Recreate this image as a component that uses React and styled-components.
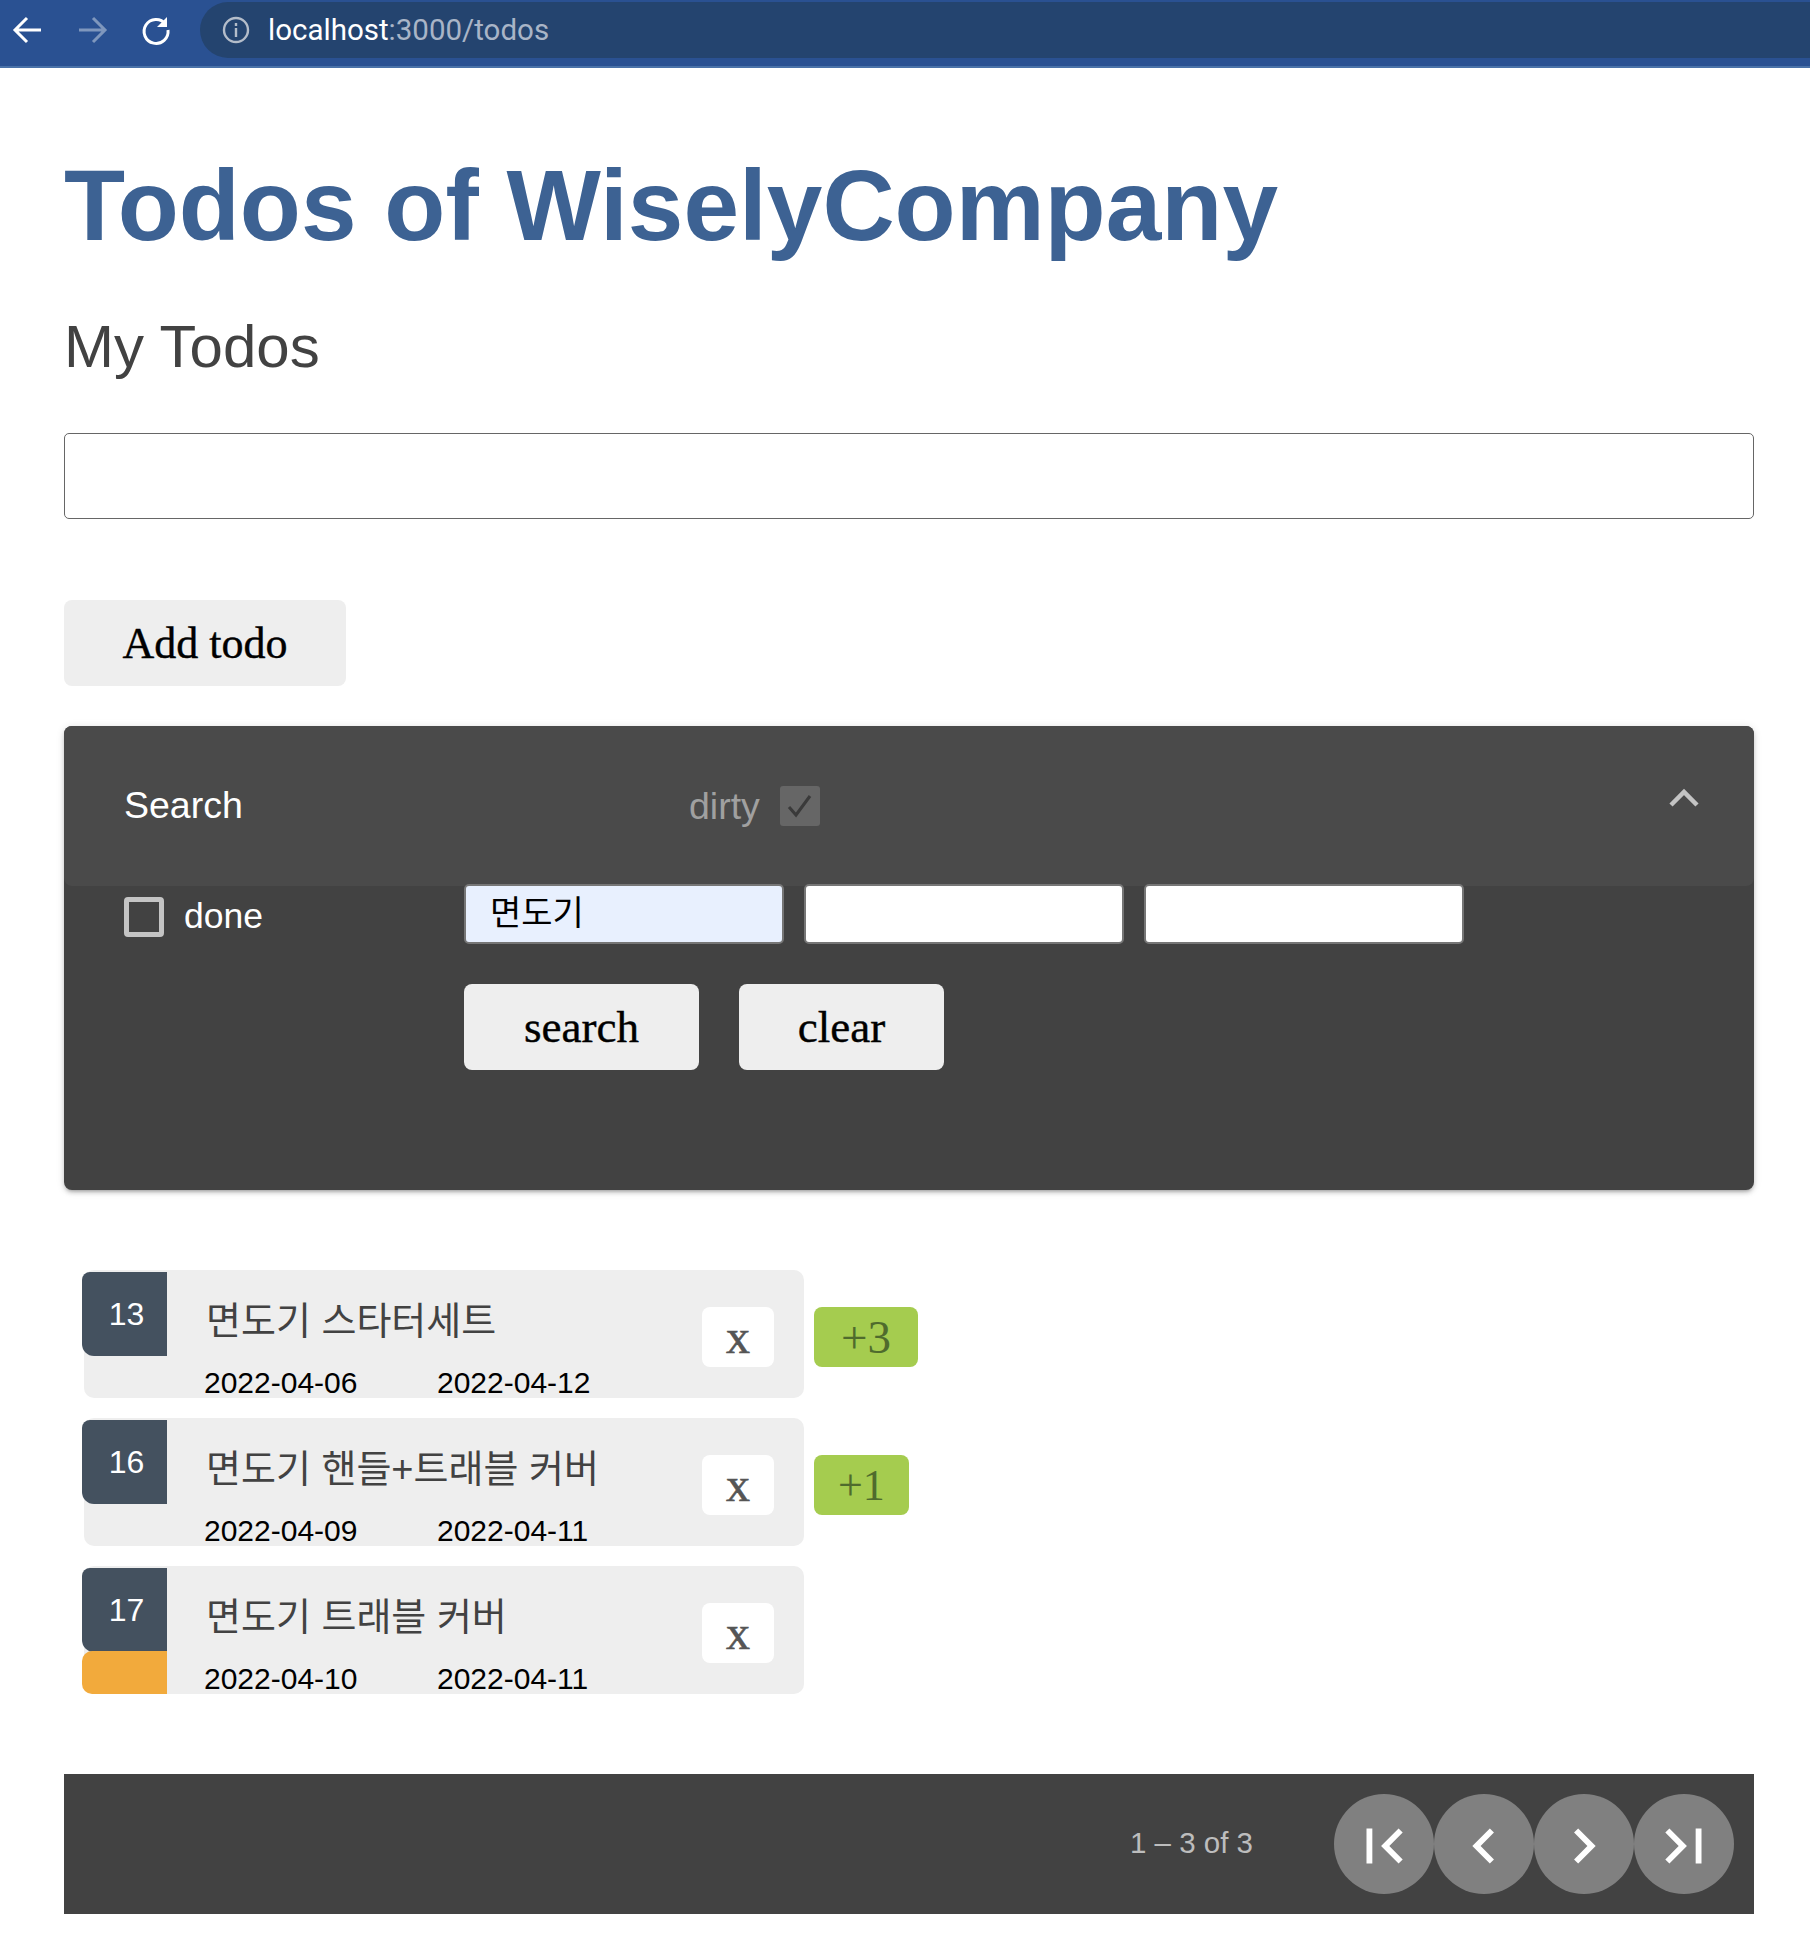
import React from 'react';
import styled, { createGlobalStyle } from 'styled-components';

const SANS = '"Liberation Sans", "Noto Sans CJK KR", sans-serif';
const SERIF = '"Liberation Serif", "Noto Sans CJK KR", serif';

const GlobalStyle = createGlobalStyle`
  html, body {
    margin: 0;
    padding: 0;
    background: #fff;
  }
  body {
    font-family: ${SANS};
    color: #424242;
  }
  * {
    box-sizing: border-box;
  }
`;

const BrowserBar = styled.div`
  height: 68px;
  padding-top: 2px;
  display: flex;
  background: #2a5192;
  border-bottom: 2px solid #4a72a8;
`;

const NavButtons = styled.div`
  width: 200px;
  height: 56px;
  flex: none;
  display: flex;
  align-items: center;
  padding-left: 10px;
  gap: 28px;
`;

const NavIcon = styled.svg`
  width: 36px;
  height: 36px;
  flex: none;
  fill: none;
  stroke: ${(props) => (props.$dim ? '#7f97bd' : '#fff')};
  stroke-width: 3;
`;

const AddressPill = styled.div`
  flex: 1;
  height: 56px;
  display: flex;
  align-items: center;
  padding-left: 22px;
  background: #24446f;
  border-radius: 28px 0 0 28px;
`;

const InfoIcon = styled.svg`
  width: 28px;
  height: 28px;
  margin-right: 18px;
  fill: none;
  stroke: #b4bdca;
  stroke-width: 2.4;
`;

const Url = styled.span`
  font-family: Roboto, sans-serif;
  font-size: 29.5px;
  color: #fff;
`;

const UrlRest = styled.span`
  color: #a9b5c7;
`;

const Page = styled.main`
  padding: 0 56px 32px 64px;
`;

const Title = styled.h1`
  margin: 81px 0 0;
  font-size: 100px;
  line-height: 112px;
  font-weight: 700;
  color: #3d6293;
`;

const Subtitle = styled.h2`
  margin: 52px 0 0;
  font-size: 60px;
  line-height: 68px;
  font-weight: 400;
  color: #424242;
`;

const TodoInput = styled.input`
  display: block;
  width: 100%;
  height: 86px;
  margin-top: 52px;
  border: 1.5px solid #666;
  border-radius: 5px;
  background: #fff;
`;

const Button = styled.button`
  width: ${(props) => props.$width}px;
  height: 86px;
  padding: 0;
  border: none;
  border-radius: 8px;
  background: #eee;
  color: #000;
  font-family: ${SERIF};
  font-size: ${(props) => props.$size || 44}px;
  -webkit-text-stroke: 0.4px #000;
`;

const AddRow = styled.div`
  margin-top: 81px;
`;

const SearchPanel = styled.section`
  margin-top: 40px;
  background: #424242;
  border-radius: 8px;
  box-shadow: 0 3px 3px -2px rgba(0, 0, 0, 0.2), 0 3px 4px 0 rgba(0, 0, 0, 0.14),
    0 1px 8px 0 rgba(0, 0, 0, 0.12);
`;

const PanelHeader = styled.div`
  height: 160px;
  display: flex;
  align-items: center;
  padding: 0 52px 0 60px;
  background: #4a4a4a;
  border-radius: 8px;
`;

const PanelTitle = styled.span`
  width: 565px;
  flex: none;
  margin-top: -2px;
  font-size: 37.5px;
  color: #fff;
`;

const DirtyLabel = styled.span`
  font-size: 37.5px;
  color: #a0a0a0;
`;

const DirtyBox = styled.span`
  width: 40px;
  height: 40px;
  margin-left: 20px;
  display: flex;
  align-items: center;
  justify-content: center;
  background: #666;
  border-radius: 3px;
`;

const DirtyCheck = styled.svg`
  width: 34px;
  height: 34px;
  fill: none;
  stroke: #3a3a3a;
  stroke-width: 3;
`;

const Chevron = styled.svg`
  width: 36px;
  height: 36px;
  margin-left: auto;
  margin-top: -18px;
  fill: none;
  stroke: #c4c4c4;
  stroke-width: 4.5;
`;

const PanelBody = styled.div`
  display: flex;
  padding: 0 60px 120px;
`;

const DoneField = styled.label`
  width: 340px;
  flex: none;
  display: flex;
  align-items: center;
  height: 61px;
  font-size: 35.5px;
  color: #fff;
`;

const DoneBox = styled.span`
  width: 40px;
  height: 40px;
  margin-right: 20px;
  border: 5px solid #c4c4c4;
  border-radius: 4px;
`;

const SearchForm = styled.div`
  display: flex;
  flex-direction: column;
  margin-top: -2px;
  position: relative;
`;

const FieldRow = styled.div`
  display: flex;
  gap: 20px;
`;

const SearchField = styled.input`
  width: 320px;
  height: 60px;
  padding: 0 24px 8px;
  border: 2px solid #767676;
  border-radius: 5px;
  background: ${(props) => (props.$filled ? '#e8f0fe' : '#fff')};
  color: #000;
  font-family: ${SERIF};
  font-size: 34px;
`;

const ActionRow = styled.div`
  display: flex;
  gap: 40px;
  margin-top: 40px;
`;

const TodoList = styled.div`
  margin-top: 80px;
  padding-left: 20px;
  display: flex;
  flex-direction: column;
  gap: 20px;
`;

const TodoRow = styled.div`
  display: flex;
  gap: 10px;
`;

const TodoCard = styled.div`
  width: 720px;
  height: 128px;
  display: flex;
  background: #eee;
  border-radius: 10px;
`;

const IdColumn = styled.div`
  width: 85px;
  flex: none;
  margin: 2px 0 0 -2px;
  display: flex;
  flex-direction: column;
`;

const IdBox = styled.div`
  height: 84px;
  flex: none;
  display: flex;
  align-items: center;
  justify-content: center;
  padding-left: 4px;
  background: #44515f;
  border-radius: 8px 0 0 12px;
  color: #fff;
  font-size: 32px;
`;

const WarnStrip = styled.div`
  flex: 1;
  margin-top: -1px;
  background: #f2aa3c;
  border-radius: 10px 0 0 10px;
`;

const TodoMain = styled.div`
  flex: 1;
  padding-left: 37px;
`;

const TodoTitle = styled.div`
  margin: 21px 0 0 2px;
  font-size: 38px;
  line-height: 60px;
  color: #424242;
`;

const Dates = styled.div`
  display: flex;
  margin-top: 15px;
  font-size: 30px;
  line-height: 34px;
  color: #000;
`;

const DateText = styled.span`
  width: 233px;
`;

const SquareButton = styled.button`
  width: 72px;
  height: 60px;
  flex: none;
  margin: 37px 30px 0 0;
  border: none;
  border-radius: 8px;
  background: #fff;
  color: #555;
  font-family: ${SERIF};
  font-size: 48px;
  line-height: 1;
  -webkit-text-stroke: 0.6px #555;
`;

const CountBadge = styled.button`
  height: 60px;
  margin-top: 37px;
  padding: 0 ${(props) => props.$pad}px;
  border: none;
  border-radius: 8px;
  background: #a5cc4f;
  color: #4f6b2d;
  font-family: ${SERIF};
  font-size: ${(props) => props.$size}px;
`;

const Paginator = styled.nav`
  height: 140px;
  margin-top: 80px;
  display: flex;
  align-items: center;
  justify-content: flex-end;
  padding-right: 20px;
  background: #424242;
`;

const RangeLabel = styled.span`
  margin: -2px 81px 0 0;
  font-size: 29.5px;
  color: #bdbdbd;
`;

const PageButton = styled.button`
  width: 100px;
  height: 100px;
  padding: 3px 0 0;
  display: flex;
  align-items: center;
  justify-content: center;
  border: none;
  border-radius: 50%;
  background: #808080;
`;

const PageIcon = styled.svg`
  width: 70px;
  height: 70px;
  flex: none;
  fill: #fff;
`;

const todos = [
  { id: 13, title: '면도기 스타터세트', from: '2022-04-06', to: '2022-04-12', count: '+3', pad: 27, size: 47 },
  { id: 16, title: '면도기 핸들+트래블 커버', from: '2022-04-09', to: '2022-04-11', count: '+1', pad: 24, size: 44 },
  { id: 17, title: '면도기 트래블 커버', from: '2022-04-10', to: '2022-04-11', warn: true },
];

const pageIcons = [
  'M18.41 16.59 13.82 12l4.59-4.59L17 6l-6 6 6 6zM6 6h2v12H6z',
  'M15.41 7.41 14 6l-6 6 6 6 1.41-1.41L10.83 12z',
  'M10 6 8.59 7.41 13.17 12l-4.58 4.59L10 18l6-6z',
  'M5.59 7.41 10.18 12l-4.59 4.59L7 18l6-6-6-6zM16 6h2v12h-2z',
];

export default function App() {
  return (
    <>
      <GlobalStyle />
      <BrowserBar>
        <NavButtons>
          <NavIcon viewBox="0 0 36 36">
            <path d="M31 18H6M17 6 5 18l12 12" />
          </NavIcon>
          <NavIcon viewBox="0 0 36 36" $dim>
            <path d="M5 18h25M19 6l12 12-12 12" />
          </NavIcon>
          <NavIcon viewBox="0 0 36 36">
            <path d="M27.5 12A12 12 0 1 0 30 18" />
            <path d="M29 5v10H19z" fill="#fff" stroke="none" />
          </NavIcon>
        </NavButtons>
        <AddressPill>
          <InfoIcon viewBox="0 0 28 28">
            <circle cx="14" cy="14" r="12" />
            <path d="M14 12v9M14 7v3" />
          </InfoIcon>
          <Url>
            localhost<UrlRest>:3000/todos</UrlRest>
          </Url>
        </AddressPill>
      </BrowserBar>

      <Page>
        <Title>Todos of WiselyCompany</Title>
        <Subtitle>My Todos</Subtitle>
        <TodoInput />
        <AddRow>
          <Button $width={282}>Add todo</Button>
        </AddRow>

        <SearchPanel>
          <PanelHeader>
            <PanelTitle>Search</PanelTitle>
            <DirtyLabel>dirty</DirtyLabel>
            <DirtyBox>
              <DirtyCheck viewBox="0 0 34 34">
                <path d="M6 18l7 8L27 7" />
              </DirtyCheck>
            </DirtyBox>
            <Chevron viewBox="0 0 36 36">
              <path d="M5 26 18 13l13 13" />
            </Chevron>
          </PanelHeader>
          <PanelBody>
            <DoneField>
              <DoneBox />
              done
            </DoneField>
            <SearchForm>
              <FieldRow>
                <SearchField $filled defaultValue="면도기" />
                <SearchField />
                <SearchField />
              </FieldRow>
              <ActionRow>
                <Button $width={235} $size={45}>search</Button>
                <Button $width={205} $size={45}>clear</Button>
              </ActionRow>
            </SearchForm>
          </PanelBody>
        </SearchPanel>

        <TodoList>
          {todos.map((todo) => (
            <TodoRow key={todo.id}>
              <TodoCard>
                <IdColumn>
                  <IdBox>{todo.id}</IdBox>
                  {todo.warn && <WarnStrip />}
                </IdColumn>
                <TodoMain>
                  <TodoTitle>{todo.title}</TodoTitle>
                  <Dates>
                    <DateText>{todo.from}</DateText>
                    <DateText>{todo.to}</DateText>
                  </Dates>
                </TodoMain>
                <SquareButton>x</SquareButton>
              </TodoCard>
              {todo.count && (
                <CountBadge $pad={todo.pad} $size={todo.size}>
                  {todo.count}
                </CountBadge>
              )}
            </TodoRow>
          ))}
        </TodoList>

        <Paginator>
          <RangeLabel>1 – 3 of 3</RangeLabel>
          {pageIcons.map((d) => (
            <PageButton key={d}>
              <PageIcon viewBox="0 0 24 24">
                <path d={d} />
              </PageIcon>
            </PageButton>
          ))}
        </Paginator>
      </Page>
    </>
  );
}
